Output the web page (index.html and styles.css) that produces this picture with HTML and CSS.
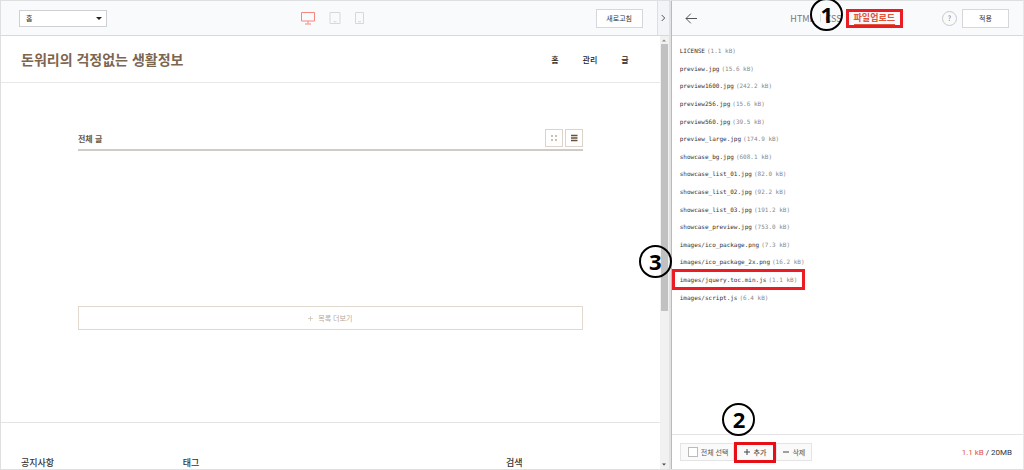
FILE: index.html
```html
<!DOCTYPE html>
<html lang="ko">
<head>
<meta charset="utf-8">
<title>스킨 편집</title>
<link rel="stylesheet" href="styles.css">
</head>
<body>
<div class="editor">
  <section class="preview">
    <header class="toolbar">
      <div class="toolbar-main">
        <div class="page-select">
          <select aria-label="페이지"><option>홈</option></select>
          <svg class="caret" viewBox="0 0 6 3" aria-hidden="true"><path d="M0 0h6L3 3z" fill="#222"/></svg>
        </div>
        <div class="devices">
          <button type="button" class="device" aria-label="데스크톱">
            <svg width="14" height="14" viewBox="0 0 14 14" fill="none" stroke="#f5877e"><path d="M.5 1.5h13v8.500H.5zM7 10v2.500M4 13h6"/></svg>
          </button>
          <button type="button" class="device" aria-label="태블릿">
            <svg width="12" height="14" viewBox="0 0 12 14" fill="none" stroke="#d6d8da"><path d="M1 1.500h10v11H1zM4.500 10.700h3"/></svg>
          </button>
          <button type="button" class="device" aria-label="휴대폰">
            <svg width="9" height="14" viewBox="0 0 9 14" fill="none" stroke="#d6d8da"><path d="M.5 1.500h8v11h-8zM3 10.700h3"/></svg>
          </button>
        </div>
        <button type="button" class="btn refresh">새로고침</button>
      </div>
      <button type="button" class="collapse" aria-label="접기">
        <svg width="5" height="8" viewBox="0 0 5 8" fill="none" stroke="#555"><path d="M.7 1l3 3-3 3"/></svg>
      </button>
    </header>
    <div class="viewport">
      <div class="site">
        <header class="site-header">
          <h1 class="site-title">돈워리의 걱정없는 생활정보</h1>
          <nav class="site-nav"><a href="#">홈</a><a href="#">관리</a><a href="#">글</a></nav>
        </header>
        <main class="posts">
          <div class="posts-head">
            <h2>전체 글</h2>
            <div class="views">
              <button type="button" class="view" aria-label="격자형">
                <svg width="8" height="8" viewBox="0 0 8 8" fill="#cdbfb0"><path d="M1 1h2v2H1zM5 1h2v2H5zM1 5h2v2H1zM5 5h2v2H5z"/></svg>
              </button>
              <button type="button" class="view" aria-label="목록형">
                <svg width="8" height="8" viewBox="0 0 8 8" stroke="#675239" stroke-width="1.400"><path d="M1 1.500h6.500M1 4h6.500M1 6.500h6.500"/></svg>
              </button>
            </div>
          </div>
          <button type="button" class="more">
            <svg width="5" height="5" viewBox="0 0 5 5" stroke="#c9bdae" stroke-width=".7"><path d="M2.500 0v5M0 2.500h5"/></svg>
            목록 더보기
          </button>
        </main>
        <footer class="site-footer"><h3>공지사항</h3><h3>태그</h3><h3>검색</h3></footer>
      </div>
      <div class="scrollbar" aria-hidden="true">
        <svg width="6" height="8" viewBox="0 0 6 8"><path d="M1 5.500h4L3 3.500z" fill="#888"/></svg>
        <div class="track"><div class="thumb"></div></div>
        <svg width="6" height="8" viewBox="0 0 6 8"><path d="M1 2.500h4L3 4.500z" fill="#444"/></svg>
      </div>
    </div>
  </section>

  <section class="files">
    <header class="files-head">
      <button type="button" class="back" aria-label="뒤로">
        <svg width="12" height="11" viewBox="0 0 12 11" fill="none" stroke="#555"><path d="M12 5.500H1M5.800.7L1 5.500l4.800 4.800"/></svg>
      </button>
      <nav class="tabs">
        <a href="#">HTML</a><span class="bar"></span><a href="#">CSS</a>
        <a href="#" class="active"><span>파일업로드</span></a>
        <b class="step step-1">1</b>
      </nav>
      <div class="head-actions">
        <button type="button" class="help" aria-label="도움말">?</button>
        <button type="button" class="btn">적용</button>
      </div>
    </header>
    <div class="files-body">
      <ul class="file-list">
        <li>LICENSE <small>(1.1 kB)</small></li>
        <li>preview.jpg <small>(15.6 kB)</small></li>
        <li>preview1600.jpg <small>(242.2 kB)</small></li>
        <li>preview256.jpg <small>(15.6 kB)</small></li>
        <li>preview560.jpg <small>(39.5 kB)</small></li>
        <li>preview_large.jpg <small>(174.9 kB)</small></li>
        <li>showcase_bg.jpg <small>(608.1 kB)</small></li>
        <li>showcase_list_01.jpg <small>(82.0 kB)</small></li>
        <li>showcase_list_02.jpg <small>(92.2 kB)</small></li>
        <li>showcase_list_03.jpg <small>(191.2 kB)</small></li>
        <li>showcase_preview.jpg <small>(753.0 kB)</small></li>
        <li>images/ico_package.png <small>(7.3 kB)</small></li>
        <li>images/ico_package_2x.png <small>(16.2 kB)</small></li>
        <li class="marked">images/jquery.toc.min.js <small>(1.1 kB)</small><b class="step step-3">3</b></li>
        <li>images/script.js <small>(6.4 kB)</small></li>
      </ul>
    </div>
    <footer class="files-foot">
      <div class="file-actions">
        <label class="action all"><input type="checkbox">전체 선택</label>
        <div class="add-wrap">
          <button type="button" class="action add"><svg width="6" height="6" viewBox="0 0 6 6" stroke="#444"><path d="M3 0v6M0 3h6"/></svg>추가</button>
          <b class="step step-2">2</b>
        </div>
        <button type="button" class="action"><svg width="6" height="6" viewBox="0 0 6 6" stroke="#444"><path d="M0 3h6"/></svg>삭제</button>
      </div>
      <p class="usage"><em>1.1 kB</em> / 20MB</p>
    </footer>
  </section>
</div>
</body>
</html>
```
FILE: styles.css
```css
* { box-sizing: border-box; }

body, h1, h2, h3, p, ul { margin: 0; padding: 0; }

body {
  font-family: "Noto Sans CJK KR", sans-serif;
  font-size: 7px;
  color: #333;
  background: #fff;
}

button, select, input { font: inherit; color: inherit; margin: 0; }
button { padding: 0; border: 0; background: none; }
a { color: inherit; text-decoration: none; }
svg { display: block; flex: none; }

.editor {
  display: grid;
  grid-template-columns: 671fr 353fr;
  height: 100vh;
  border: 1px solid #dedfe1;
  border-right-color: #e6e7e9;
}

.preview, .files { display: flex; flex-direction: column; min-width: 0; min-height: 0; }
.preview { border-right: 2px solid #e2e2e5; }

/* Left toolbar */
.toolbar {
  display: flex;
  flex: none;
  height: 35px;
  border-bottom: 1px solid #d5d9e6;
  background: #f9fafc;
}
.toolbar-main {
  flex: 1;
  display: grid;
  grid-template-columns: 1fr auto 1fr;
  align-items: center;
  padding: 0 14px 0 18px;
}
.page-select { position: relative; width: 88px; }
.page-select select {
  display: block;
  width: 100%;
  height: 17px;
  padding: 0 6px;
  border: 1px solid #cfd0d3;
  border-radius: 0;
  background: #fff;
  appearance: none;
}
.caret { position: absolute; right: 5px; top: 7px; width: 6px; height: 3px; }
.devices { display: flex; gap: 14px; padding-left: 4px; }
.btn {
  height: 19px;
  min-width: 47px;
  border: 1px solid #d5d7da;
  background: #fff;
}
.refresh { justify-self: end; }
.collapse {
  display: flex;
  align-items: center;
  justify-content: center;
  width: 12px;
  border-left: 1px solid #dcdee4;
  background: #f3f4f7;
}

/* Previewed site */
.viewport { flex: 1; display: flex; min-height: 0; }
.site { flex: 1; display: flex; flex-direction: column; overflow: hidden; }
.site-header {
  display: flex;
  align-items: center;
  justify-content: space-between;
  height: 47px;
  padding: 0 31px 0 20px;
  border-bottom: 1px solid #e8e8e8;
}
.site-title { font-size: 14px; line-height: 20px; font-weight: 700; color: #7d6650; }
.site-nav { display: flex; gap: 24px; font-size: 8px; font-weight: 500; color: #222; }
.posts { flex: 1; padding: 46px 77px 0 77px; }
.posts-head {
  display: flex;
  align-items: center;
  justify-content: space-between;
  padding-bottom: 2px;
  border-bottom: 2px solid #d0cbc6;
}
.posts-head h2 { font-size: 8px; font-weight: 700; color: #6a553f; }
.views { display: flex; gap: 2px; }
.view {
  display: flex;
  align-items: center;
  justify-content: center;
  width: 18px;
  height: 18px;
  border: 1px solid #ddd4c9;
}
.more {
  display: flex;
  align-items: center;
  justify-content: center;
  gap: 5px;
  width: 100%;
  height: 24px;
  margin-top: 155px;
  border: 1px solid #e2d9ce;
  color: #b5a897;
}
.site-footer {
  display: grid;
  grid-template-columns: 162fr 324fr 154fr;
  height: 47px;
  padding: 33px 0 0 20px;
  border-top: 1px solid #e4e4e4;
}
.site-footer h3 { font-size: 9px; line-height: 14px; font-weight: 500; color: #333; }

.scrollbar {
  display: flex;
  flex-direction: column;
  align-items: center;
  width: 9px;
  background: #f1f1f1;
}
.track { flex: 1; width: 7px; }
.thumb { height: 64%; background: #c1c1c1; }

/* File panel */
.files { border-left: 1px solid #b9bac0; }
.files-head {
  display: flex;
  flex: none;
  align-items: center;
  height: 35px;
  padding: 0 14px 0 13px;
  border-bottom: 1px solid #d5d9e6;
  background: #f9fafc;
}
.tabs {
  position: relative;
  display: flex;
  align-items: center;
  margin-left: auto;
  font-size: 9px;
  color: #777;
}
.bar { width: 1px; height: 8px; margin: 0 5px; background: #ddd; }
.active {
  margin-left: 4px;
  padding: 0 5px;
  border: 3px solid #ec1c24;
  line-height: 12px;
  font-weight: 700;
  color: #e2573c;
}
.active span { display: block; border-bottom: 1px solid #e2573c; }
.head-actions { display: flex; align-items: center; gap: 5px; margin-left: 39px; }
.help {
  width: 15px;
  height: 15px;
  border: 1px solid #c8c9cc;
  border-radius: 50%;
  line-height: 12px;
  color: #777;
}

.files-body { flex: 1; padding: 6px 8px; }
.file-list {
  display: grid;
  grid-auto-rows: 1fr;
  justify-items: start;
  min-height: 264px;
  list-style: none;
  font-family: "DejaVu Sans Mono", monospace;
  font-size: 6px;
  color: #333;
}
.file-list li { display: flex; align-items: center; gap: 2px; }
.file-list small { font-size: 6px; color: #888; }

/* Numbered callouts */
.marked { position: relative; }
.marked::before {
  content: "";
  position: absolute;
  inset: -2px -8px;
  border: 3px solid #ec1c24;
}
.step {
  position: absolute;
  z-index: 1;
  width: 33px;
  height: 33px;
  border: 2px solid #000;
  border-radius: 50%;
  font: 700 22px/28px "Noto Sans", sans-serif;
  text-align: center;
  color: #000;
}
.step-1 { left: 20px; top: -11px; }
.step-2 { left: -12px; top: -39px; }
.step-3 { left: -41px; top: -26px; }

.files-foot {
  display: flex;
  align-items: center;
  justify-content: space-between;
  height: 35px;
  padding: 0 11px 0 8px;
  border-top: 1px solid #e4e4e6;
}
.file-actions { display: flex; align-items: center; color: #555; }
.action {
  display: flex;
  align-items: center;
  justify-content: center;
  gap: 3px;
  height: 18px;
  padding: 0 6px;
  border: 1px solid #e4e4e6;
  background: #fafafa;
}
.all { padding: 0 5px 0 7px; }
.all input {
  width: 10px;
  height: 10px;
  border: 1px solid #bbb;
  background: #fff;
  appearance: none;
}
.add-wrap { position: relative; }
.add { height: 21px; width: 42px; border: 3px solid #e60f16; padding: 0; font-weight: 500; }
.usage { font-family: Roboto, sans-serif; font-size: 8px; color: #333; }
.usage em { font-style: normal; color: #e2573c; }
```
